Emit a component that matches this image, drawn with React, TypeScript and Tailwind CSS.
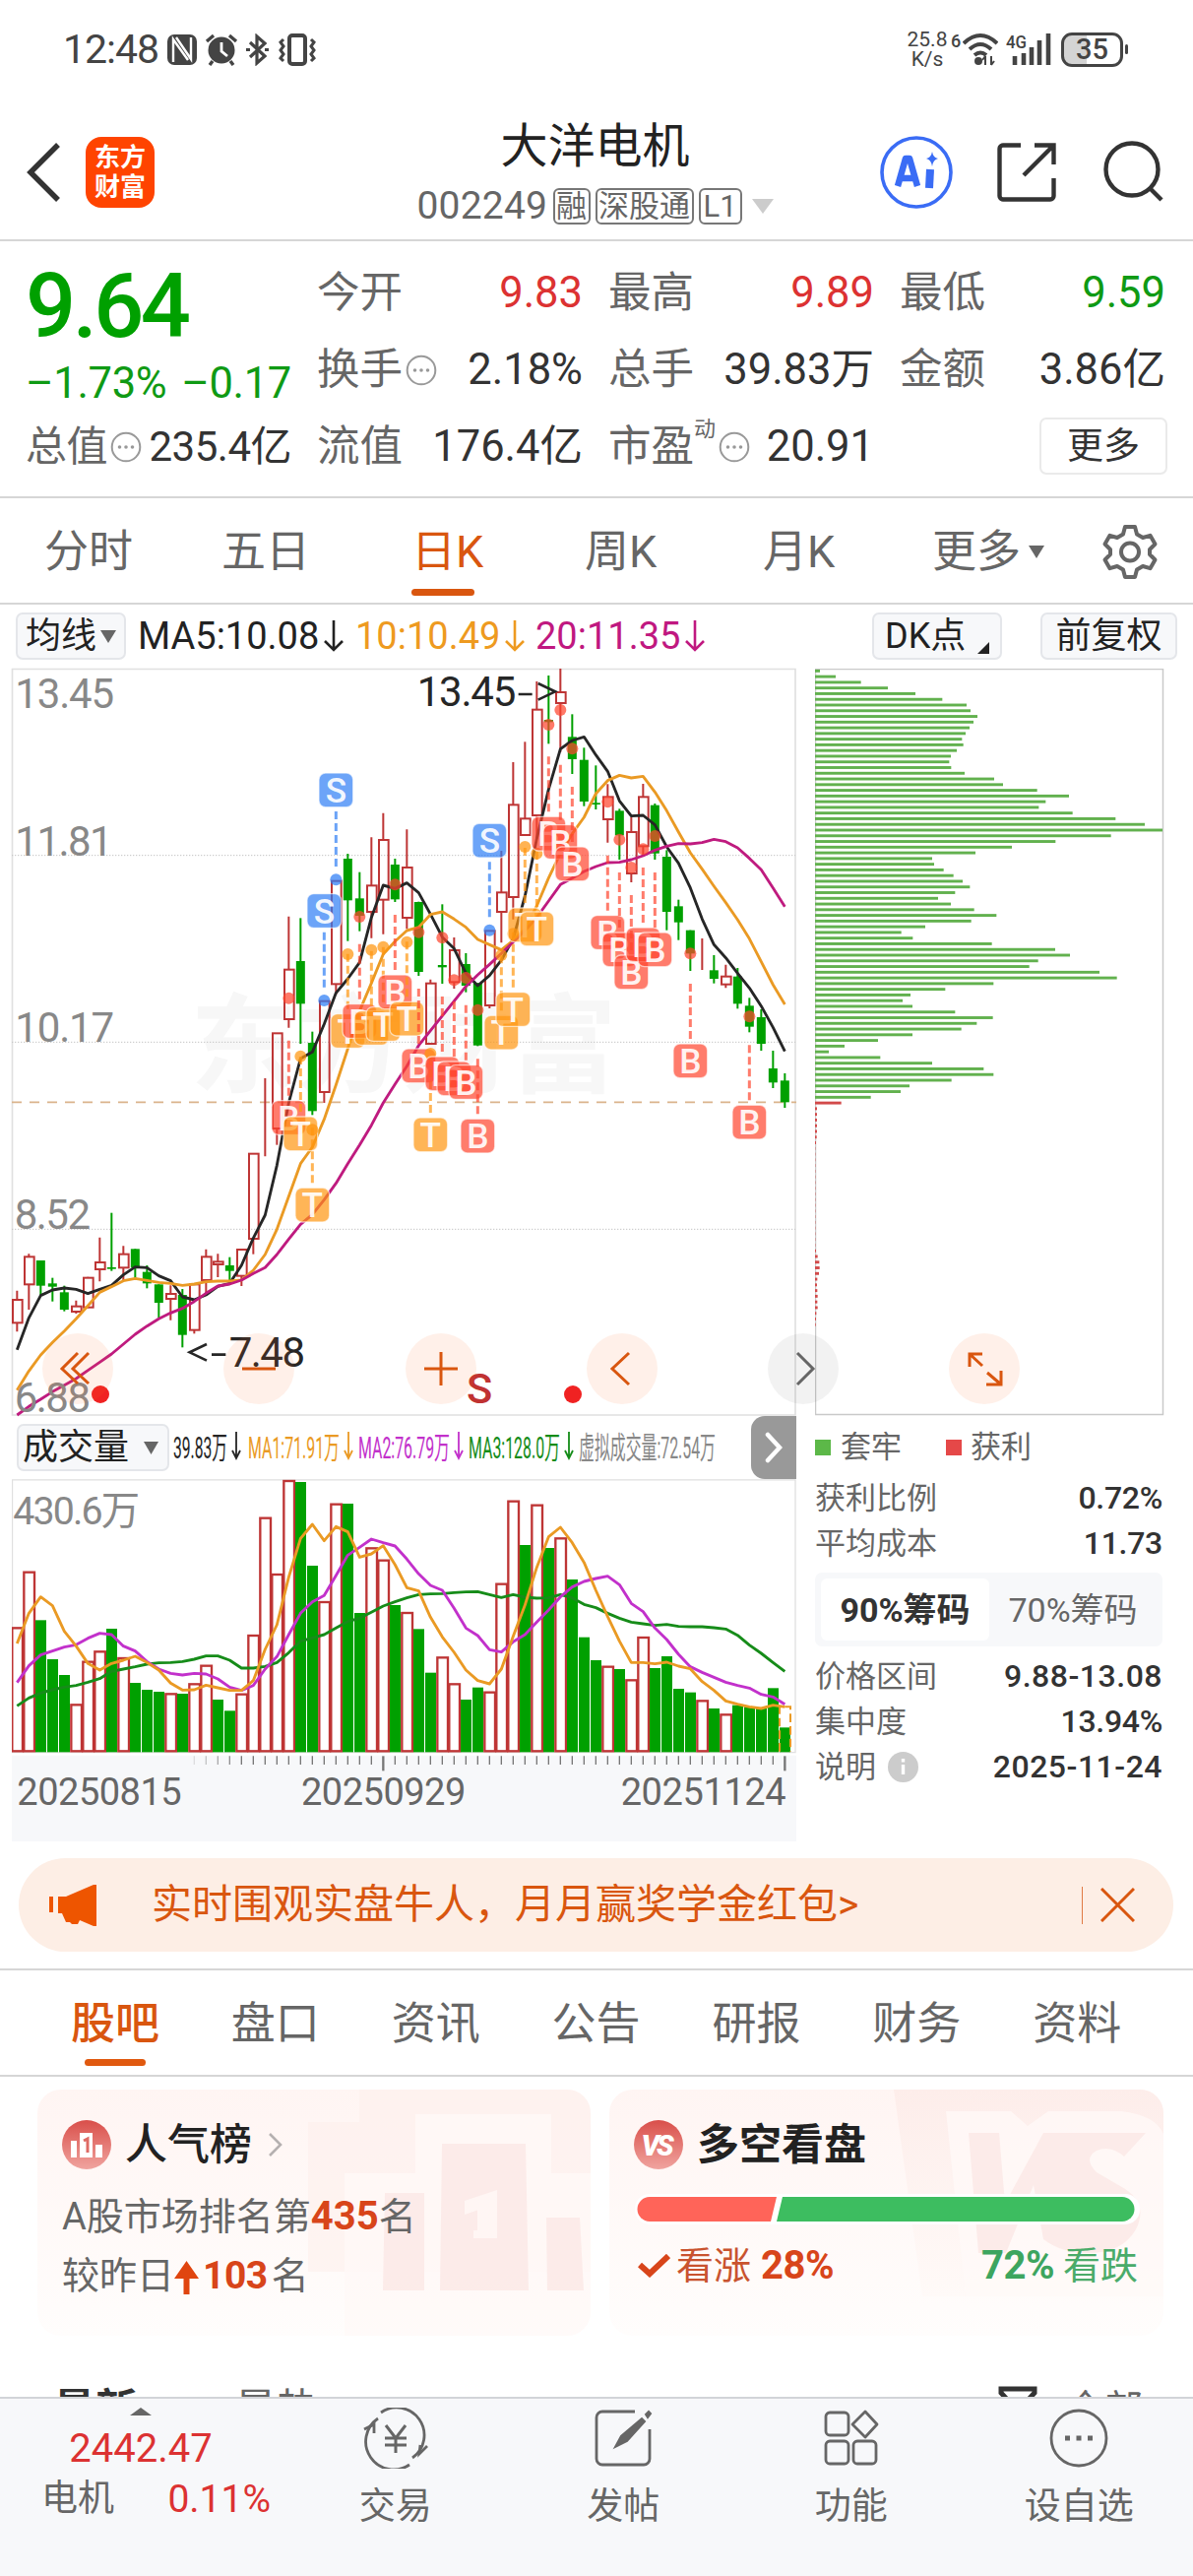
import type { ReactNode } from "react";

type Candle = [color: string, high: number, top: number, bottom: number, low: number];
type Mark = [kind: "B" | "S" | "T", index: number, dot: number];

// Chart coordinates are in thirds of a pixel, one trading day is 36 units wide
const STEP = 36;
const START = 52;
const dayX = (i: number) => START + i * STEP;

const candles: Candle[] = [
  ["r", 1922, 1950, 2020, 2047], ["r", 1810, 1819, 1903, 1980], ["g", 1830, 1830, 1907, 1935],
  ["g", 1883, 1900, 1910, 1955], ["g", 1907, 1927, 1980, 1985], ["r", 1952, 1970, 1986, 1992],
  ["r", 1880, 1883, 1973, 1975], ["r", 1760, 1836, 1857, 1894], ["g", 1685, 1851, 1856, 1862],
  ["r", 1786, 1811, 1852, 1890], ["g", 1795, 1795, 1852, 1885], ["g", 1845, 1865, 1900, 1915],
  ["g", 1903, 1903, 1959, 2005], ["r", 1906, 1932, 1947, 2012], ["g", 1917, 1935, 2057, 2095],
  ["r", 1903, 1903, 2042, 2053], ["r", 1796, 1819, 1890, 1930], ["r", 1810, 1834, 1842, 1881],
  ["g", 1820, 1845, 1862, 1890], ["r", 1797, 1797, 1877, 1908], ["r", 1505, 1505, 1764, 1811],
  ["r", 1275, 1465, 1465, 1513], ["r", 1138, 1138, 1428, 1478], ["r", 782, 944, 1095, 1121],
  ["g", 787, 918, 1048, 1170], ["g", 1133, 1167, 1375, 1387], ["r", 1040, 1040, 1317, 1350],
  ["r", 674, 674, 988, 1020], ["g", 591, 606, 733, 857], ["g", 647, 727, 780, 827],
  ["r", 541, 688, 768, 848], ["r", 467, 549, 731, 836], ["g", 606, 624, 730, 738],
  ["r", 517, 633, 786, 820], ["g", 737, 738, 951, 963], ["r", 974, 986, 1170, 1173],
  ["g", 745, 930, 937, 987], ["r", 846, 885, 982, 1002], ["g", 894, 927, 993, 1013],
  ["g", 985, 985, 1175, 1177], ["r", 826, 826, 1053, 1062], ["r", 582, 709, 768, 862],
  ["r", 312, 442, 723, 791], ["r", 250, 484, 534, 534], ["r", 66, 152, 474, 546],
  ["g", 48, 183, 190, 256], ["r", 27, 99, 132, 281], ["g", 166, 235, 303, 348],
  ["g", 268, 305, 432, 446], ["g", 322, 436, 441, 456], ["r", 379, 418, 486, 557],
  ["g", 454, 460, 535, 609], ["r", 480, 525, 651, 678], ["r", 378, 418, 568, 594],
  ["g", 438, 443, 590, 609], ["g", 580, 600, 768, 824], ["g", 731, 751, 800, 854],
  ["g", 824, 824, 895, 948], ["r", 849, 900, 900, 945], ["g", 900, 946, 972, 986],
  ["r", 929, 965, 989, 1000], ["g", 939, 965, 1048, 1063], ["g", 1030, 1054, 1118, 1135],
  ["g", 1065, 1089, 1170, 1191], ["g", 1191, 1245, 1288, 1305], ["g", 1260, 1282, 1348, 1365],
];

const ma5 = [
  2102, 2005, 1937, 1920, 1914, 1918, 1931, 1918, 1906, 1874, 1850, 1852, 1877, 1892, 1941, 1950, 1935, 1909, 1900,
  1845, 1762, 1692, 1540, 1350, 1215, 1195, 1110, 1015, 972, 922, 785, 687, 697, 680, 710, 775, 845, 880, 955, 993,
  962, 915, 850, 720, 545, 395, 272, 246, 235, 290, 340, 430, 476, 474, 503, 570, 620, 695, 790, 868, 908, 955, 1000,
  1055, 1120, 1193,
];
const ma10 = [
  2225, 2167, 2118, 2080, 2045, 2008, 1968, 1927, 1910, 1892, 1885, 1891, 1897, 1900, 1906, 1902, 1895, 1893, 1893,
  1890, 1860, 1812, 1735, 1635, 1535, 1485, 1400, 1295, 1185, 1070, 985, 897, 858, 825, 815, 776, 768, 790, 815, 852,
  868, 884, 855, 820, 750, 665, 590, 530, 480, 408, 368, 352, 360, 355, 403, 460, 525, 588, 638, 690, 740, 792, 850,
  920, 990, 1050,
];
const ma20 = [
  2301, 2275, 2253, 2230, 2210, 2190, 2165, 2140, 2115, 2085, 2055, 2030, 2008, 1990, 1976, 1955, 1930, 1908, 1902,
  1890, 1870, 1852, 1812, 1765, 1720, 1690, 1645, 1595, 1535, 1478, 1418, 1350, 1293, 1238, 1175, 1130, 1085, 1040,
  995, 960, 928, 895, 860, 825, 785, 735, 685, 665, 645, 630, 618, 617, 609, 597, 580, 568, 560, 561, 557, 547, 554,
  573, 605, 640, 695, 752,
];

const marks: Mark[] = [
  ["B", 23, 1031], ["T", 24, 1208], ["T", 25, 1432], ["S", 26, 1038], ["S", 27, 670], ["T", 28, 897],
  ["B", 29, 783], ["T", 30, 884], ["T", 31, 875], ["B", 32, 685], ["T", 33, 860], ["B", 34, 830],
  ["T", 35, 1200], ["B", 36, 847], ["B", 37, 976], ["B", 38, 969], ["B", 39, 1067], ["S", 40, 824],
  ["T", 41, 900], ["T", 42, 835], ["T", 43, 570], ["T", 44, 590], ["B", 45, 198], ["B", 46, 153],
  ["B", 47, 271], ["B", 50, 433], ["B", 51, 548], ["B", 52, 633], ["B", 53, 577], ["B", 54, 537],
  ["B", 57, 895], ["B", 62, 1087],
];
const markColor = { B: "#ff452e", T: "#ff960f", S: "#2d7df5" };

const volumes =
  "r638 r468 g616 g735 g783 r872 r741 r710 g642 r730 g807 g828 g834 r839 g840 r809 r753 g858 g892 r840 r661 r303 r475 r190 g195 g450 r559 r261 g261 g594 r395 r432 g570 r592 g643 g776 r728 r809 g858 g821 r834 r504 r252 g387 r264 g396 r365 g492 g668 g738 r756 g765 r797 r667 g762 g726 g825 g836 r860 g885 r902 g875 g880 g885 g823 g943".split(
    " "
  );
const vma1 = [
  687, 595, 545, 572, 650, 695, 748, 768, 748, 738, 726, 745, 768, 808, 829, 828, 814, 822, 830, 830, 800, 705, 630,
  485, 367, 324, 374, 331, 347, 424, 414, 389, 447, 517, 527, 607, 667, 714, 768, 800, 810, 765, 665, 570, 455, 362,
  333, 380, 440, 525, 605, 680, 745, 745, 749, 744, 756, 764, 803, 830, 862, 872, 880, 885, 875, 880,
];
const vma2 = [
  806, 755, 722, 710, 698, 691, 671, 656, 660, 695, 710, 742, 765, 778, 783, 778, 780, 795, 820, 830, 815, 765, 727,
  660, 595, 560, 541, 480, 418, 394, 369, 380, 390, 430, 475, 510, 525, 580, 640, 663, 706, 713, 682, 660, 622, 585,
  545, 515, 498, 489, 482, 508, 565, 590, 640, 675, 720, 758, 775, 790, 805, 815, 823, 842, 850, 872,
];
const vma3 = [
  877, 853, 838, 828, 820, 815, 805, 794, 772, 765, 758, 750, 746, 745, 742, 735, 725, 725, 738, 762, 762, 757, 745,
  715, 680, 670, 660, 640, 620, 610, 592, 573, 560, 548, 538, 536, 535, 532, 530, 529, 538, 547, 538, 546, 549, 548,
  538, 548, 568, 578, 595, 610, 622, 627, 632, 629, 635, 636, 636, 639, 643, 662, 692, 717, 745, 772,
];

const trapped = [
  15, 63, 140, 222, 306, 388, 462, 474, 495, 483, 471, 459, 448, 452, 432, 414, 409, 415, 456, 546, 573, 677, 774, 703,
  682, 785, 916, 1005, 1059, 902, 733, 600, 489, 357, 363, 392, 422, 450, 472, 427, 375, 414, 485, 553, 476, 336, 263,
  298, 539, 732, 777, 680, 653, 867, 920, 544, 397, 291, 267, 297, 427, 542, 493, 446, 297, 192, 90, 42, 199, 357,
  514, 544, 416, 288, 261, 170,
];
const profit = [
  80, 6, 6, 6, 6, 6, 5, 3, 1, 1, 1, 1, 1, 1, 1, 1, 1, 1, 1, 1, 1, 1, 1, 1, 1, 1, 3, 8, 13, 14, 12, 7, 6, 7, 8, 7, 8,
  4, 3, 2,
];

const points = (ys: number[]) => ys.map((y, i) => `${dayX(i)},${y}`).join(" ");

function Line({ ys, color }: { ys: number[]; color: string }) {
  return <polyline points={points(ys)} fill="none" stroke={color} strokeWidth="8.600" strokeLinejoin="round" />;
}

function DownArrow() {
  return (
    <svg className="ml-1 h-8 w-[22px]" viewBox="0 0 22 32" fill="none" stroke="currentColor" strokeWidth="2.6">
      <path d="M11 0V30M2 21l9 9 9-9" />
    </svg>
  );
}

function Caret({ className = "" }: { className?: string }) {
  return (
    <svg className={className} viewBox="0 0 16 14" preserveAspectRatio="none">
      <path d="M0 0h16L8 14z" fill="currentColor" />
    </svg>
  );
}

function Dots() {
  return (
    <svg className="ml-[3px] h-8 w-8 shrink-0" viewBox="0 0 32 32">
      <circle cx="16" cy="16" r="14.3" fill="none" stroke="#999" strokeWidth="2" />
      <circle cx="9.5" cy="16" r="1.8" fill="#999" />
      <circle cx="16" cy="16" r="1.8" fill="#999" />
      <circle cx="22.5" cy="16" r="1.8" fill="#999" />
    </svg>
  );
}

function StatusBar() {
  return (
    <div className="flex h-[100px] items-center pl-[64px] pr-[66px] text-[#444]">
      <span className="w-[106px] text-[41px] leading-none tracking-[-1px]">12:48</span>
      <svg className="h-[31px] w-[30px]" viewBox="0 0 30 31">
        <rect x="0" y="0" width="30" height="31" rx="7" fill="#444" />
        <path d="M6 28V5l15 21" fill="none" stroke="#fff" strokeWidth="2.4" />
        <path d="M9 3l15 22V3" fill="none" stroke="#fff" strokeWidth="2.4" />
      </svg>
      <svg className="ml-2 h-[33px] w-[34px]" viewBox="0 0 34 33">
        <circle cx="17" cy="17" r="13.5" fill="#444" />
        <path d="M2 8l7-6M32 8l-7-6M8 28l-3 4M26 28l3 4" stroke="#444" strokeWidth="3.4" />
        <path d="M17 9v9l6 5" fill="none" stroke="#fff" strokeWidth="2.8" />
      </svg>
      <svg className="ml-2 h-[33px] w-[24px]" viewBox="0 0 24 33" fill="none" stroke="#444" strokeWidth="3.2">
        <path d="M4 9l15 14-8 7V3l8 7L4 24" />
        <path d="M0 16.5h4M19 16.5h4" />
      </svg>
      <svg className="ml-2 h-[33px] w-[40px]" viewBox="0 0 40 33" fill="none" stroke="#444" strokeWidth="3">
        <rect x="12" y="2" width="16" height="29" rx="3" strokeWidth="4" />
        <path d="M6 6l-3 3 3 4-3 4 3 4-3 4 3 3M34 6l3 3-3 4 3 4-3 4 3 4-3 3" />
      </svg>
      <div className="ml-auto flex w-[46px] flex-col items-center text-[21px] leading-[20px]">
        <span>25.8</span>
        <span>K/s</span>
      </div>
      <span className="mb-4 ml-[1px] w-[12px] text-[18px] font-medium leading-none">6</span>
      <svg className="h-[34px] w-[36px]" viewBox="0 0 36 34" fill="none" stroke="#444" strokeWidth="4">
        <path d="M1 11Q18-5 35 11M7 17Q18 7 29 17" />
        <path d="M12 23q6-5 12 0" />
        <circle cx="16" cy="29" r="4" fill="#444" stroke="none" />
        <path d="M23 24v9m0-9l-3 4M29 33v-9m0 9l3-4" strokeWidth="2" />
      </svg>
      <svg className="ml-2 h-[34px] w-[46px]" viewBox="0 0 46 34">
        <text x="0" y="16" fontSize="19" fontWeight="500" textLength="21" lengthAdjust="spacingAndGlyphs" fill="#444">4G</text>
        <path d="M9 24v9M18 21v12M26 15v18M34 8v25M43 1v32" stroke="#444" strokeWidth="4.6" />
      </svg>
      <div className="ml-[10px] flex h-[35px] w-[63px] items-center justify-center rounded-[11px] border-[3px] border-[#444] bg-gradient-to-r from-[#d4d4d4] from-40% to-white to-40%">
        <span className="text-[29px] font-medium leading-none">35</span>
      </div>
      <span className="ml-[2px] h-[10px] w-[3px] rounded bg-[#444]" />
    </div>
  );
}

function TitleBar() {
  const tag = "flex h-[37px] items-center justify-center rounded-[6px] border-2 border-[#777] text-[31px] leading-none";
  return (
    <header className="flex h-[145px] border-b-2 border-[#d6d6d6]">
      <div className="flex w-[397px] items-start pl-[27px] pt-[39px]">
        <svg className="mt-[6px] h-[60px] w-[36px]" viewBox="0 0 36 60" fill="none" stroke="#333" strokeWidth="5.5">
          <path d="M32 2L4 30l28 28" />
        </svg>
        <div className="ml-6 flex h-[72px] w-[70px] flex-col items-center justify-center rounded-[16px] bg-[#ff4400] text-[26px] font-bold leading-[30px] text-white">
          <span>东方</span>
          <span>财富</span>
        </div>
      </div>
      <div className="flex w-[415px] flex-col items-center">
        <h1 className="mt-[24px] h-[50px] text-[48px] leading-[50px] text-[#222]">大洋电机</h1>
        <div className="mt-[15px] flex h-10 items-center text-[#666]">
          <span className="w-[138px] text-[39px] leading-none tracking-[0.2px]">002249</span>
          <span className={`${tag} w-[38px]`}>融</span>
          <span className={`${tag} ml-[5px] w-[100px]`}>深股通</span>
          <span className={`${tag} ml-[5px] w-[44px]`}>L1</span>
          <Caret className="ml-[10px] h-[15px] w-[22px] text-[#ccc]" />
        </div>
      </div>
      <div className="flex flex-1 items-start pl-[82px] pt-[38px]">
        <svg className="h-[74px] w-[74px]" viewBox="0 0 74 74">
          <circle cx="37" cy="37" r="35" fill="none" stroke="#3a6cf5" strokeWidth="3.6" />
          <path d="M18 51L26 23h4l8 28M21 43h13" fill="none" stroke="#3a6cf5" strokeWidth="6.5" strokeLinejoin="round" />
          <path d="M51 34l-1 19" stroke="#3a6cf5" strokeWidth="8" />
          <path d="M53 16q1 6 6 7-5 1-6 8-1-7-6-8 5-1 6-7z" fill="#3a6cf5" />
        </svg>
        <svg className="ml-[45px] mt-[7px] h-[60px] w-[60px]" viewBox="0 0 60 60" fill="none" stroke="#333" strokeWidth="4.4">
          <path d="M24 2.5H6a3.5 3.5 0 0 0-3.5 3.5V54a3.5 3.5 0 0 0 3.5 3.5H54a3.5 3.5 0 0 0 3.5-3.5V36" />
          <path d="M38 2.5H57.5V22M57 3L27 33" />
        </svg>
        <svg className="ml-[48px] mt-[5px] h-[62px] w-[62px]" viewBox="0 0 62 62" fill="none" stroke="#333" strokeWidth="4.4">
          <circle cx="29" cy="29" r="26.5" />
          <path d="M47 48l12 12" />
        </svg>
      </div>
    </header>
  );
}

function Quote({ label, value, color = "text-[#333]", children }: { label: string; value: string; color?: string; children?: ReactNode }) {
  return (
    <div className="flex h-[78px] items-center">
      <span className="text-[#666]">{label}</span>
      {children}
      <span className={`ml-auto ${color}`}>{value}</span>
    </div>
  );
}

function Quotes() {
  return (
    <section className="grid h-[261px] grid-cols-[270px_270px_270px_270px] gap-x-[26px] border-b-2 border-[#d6d6d6] pl-[26px] pt-[14px] text-[43.5px] leading-none">
      <div>
        <div className="h-[92px] text-[90px] font-medium leading-[106px] tracking-[-3.5px] text-[#00a000]">9.64</div>
        <div className="flex h-[78px] items-center justify-between text-[#0f9a14]">
          <span className="tracking-[-0.3px]">–1.73%</span>
          <span className="tracking-[-0.3px]">–0.17</span>
        </div>
        <div className="-mt-[14px] text-[42px] tracking-[-0.5px]">
          <Quote label="总值" value="235.4亿">
            <Dots />
          </Quote>
        </div>
      </div>
      <div>
        <Quote label="今开" value="9.83" color="text-[#dc3232]" />
        <Quote label="换手" value="2.18%">
          <Dots />
        </Quote>
        <Quote label="流值" value="176.4亿" />
      </div>
      <div>
        <Quote label="最高" value="9.89" color="text-[#dc3232]" />
        <Quote label="总手" value="39.83万" />
        <Quote label="市盈" value="20.91">
          <span className="mb-9 text-[22px] text-[#666]">动</span>
          <Dots />
        </Quote>
      </div>
      <div>
        <Quote label="最低" value="9.59" color="text-[#0f9a14]" />
        <Quote label="金额" value="3.86亿" />
        <div className="-mr-[2px] ml-auto mt-[9px] flex h-[58px] w-[130px] items-center justify-center rounded-[7px] border-2 border-[#eaeaea] text-[37px] text-[#333]">
          更多
        </div>
      </div>
    </section>
  );
}

function PeriodTabs() {
  return (
    <nav className="flex h-[108px] items-center border-b-2 border-[#d6d6d6] pl-[45px] pt-[2px] text-[45px] leading-none text-[#666]">
      <span className="w-[180px]">分时</span>
      <span className="w-[193px]">五日</span>
      <span className="relative w-[176px] text-[#d9560f]">
        日K
        <i className="absolute -bottom-[22px] left-0 h-[7px] w-[64px] rounded bg-[#d9560f]" />
      </span>
      <span className="w-[181px]">周K</span>
      <span className="w-[172px]">月K</span>
      <span>更多</span>
      <Caret className="ml-2 h-[13px] w-4" />
      <svg className="ml-[59px] h-[56px] w-[56px]" viewBox="0 0 56 56" fill="none" stroke="#666" strokeWidth="4" strokeLinejoin="round">
        <path d="M23 3h10l2 7.5 6 3.500 7.5-2.2 5 8.700-5.500 5.500v5l5.500 5.500-5 8.700-7.500-2.200-6 3.500-2 7.500H23l-2-7.500-6-3.500-7.500 2.200-5-8.700L8 31v-5l-5.500-5.500 5-8.700L15 14l6-3.500z" />
        <circle cx="28" cy="28.5" r="9" />
      </svg>
    </nav>
  );
}

function IndicatorRow() {
  const chip = "flex h-[48px] items-center rounded-[7px] border-2 border-[#e4e6ea] bg-[#f7f8fa] text-[36px] text-[#222]";
  return (
    <div className="flex h-[64px] items-center pl-4 text-[38px] leading-none">
      <div className={`${chip} w-[112px] pl-2`}>
        均线
        <Caret className="ml-1 h-[13px] w-4 text-[#666]" />
      </div>
      <span className="ml-3 flex w-[221px] items-center text-[#222]">
        MA5:10.08
        <DownArrow />
      </span>
      <span className="flex w-[183px] items-center text-[#ee9a20]">
        10:10.49
        <DownArrow />
      </span>
      <span className="flex w-[342px] items-center text-[#c01880]">
        20:11.35
        <DownArrow />
      </span>
      <div className={`${chip} w-[132px] pl-[11px]`}>
        DK点
        <svg className="ml-[12px] mt-6 h-[12px] w-[12px]" viewBox="0 0 12 12">
          <path d="M12 0v12H0z" fill="#222" />
        </svg>
      </div>
      <div className={`${chip} ml-[39px] w-[139px] justify-center`}>前复权</div>
    </div>
  );
}

function Badge({ mark: [kind, index, dot] }: { mark: Mark }) {
  const x = dayX(index);
  const low = candles[index][4];
  const up = kind === "S";
  const y = up ? dot - 273 : low + 274;
  const from = up ? y + 65 : low + 39;
  const color = markColor[kind];
  return (
    <g>
      <path d={`M${x} ${from}V${from + 168}`} stroke={color} strokeWidth="9" strokeDasharray="24 12" opacity="0.7" />
      <circle cx={x} cy={dot} r="18" fill={color} opacity="0.72" />
      <rect x={x - 52} y={y - 52} width="104" height="104" rx="20" fill={color} fillOpacity="0.7" stroke="#fff" strokeOpacity="0.6" strokeWidth="4" />
      <text x={x} y={y + 38} fontSize="106" fontWeight="500" textAnchor="middle" fill="#fff" fillOpacity="0.92">
        {kind}
      </text>
    </g>
  );
}

function CandleChart() {
  return (
    <svg className="block h-[760px] w-[798px] overflow-visible" viewBox="36 27 2394 2280">
      <text x="580" y="1292" fontSize="326" fontWeight="700" textLength="1300" fill="#f7f7f7">东方财富</text>
      <path d="M37.500 2301V28.500H2424V2301z" fill="none" stroke="#e0e0e0" strokeWidth="5" />
      <path d="M36 596H2424M36 1165H2424M36 1735H2424" stroke="#c4c4c4" strokeWidth="3" strokeDasharray="4 5" />
      <path d="M36 1348H2427" stroke="#dab48c" strokeWidth="5" strokeDasharray="30 24" />
      {candles.map(([color, high, top, bottom, low], i) => {
        const x = dayX(i);
        if (color === "g") {
          return (
            <g key={i} fill="#00a000">
              <rect x={x - 3} y={high} width="6" height={low - high} />
              <rect x={x - 13.5} y={top} width="27" height={Math.max(bottom - top, 4)} />
            </g>
          );
        }
        return (
          <g key={i} stroke="#be3535" strokeWidth="6" fill="none">
            <path d={`M${x} ${high}V${top}M${x} ${bottom}V${low}`} />
            <rect x={x - 13} y={top} width="29" height={bottom - top} />
          </g>
        );
      })}
      <Line ys={ma5} color="#262626" />
      <Line ys={ma10} color="#ea9a24" />
      <Line ys={ma20} color="#bf1b7f" />
      {marks.map((mark, i) => (
        <Badge key={i} mark={mark} />
      ))}
      <g fontSize="126" fill="#888">
        <text x="46" y="148" textLength="302">13.45</text>
        <text x="46" y="597" textLength="298">11.81</text>
        <text x="46" y="1164" textLength="302">10.17</text>
        <text x="44" y="1735" textLength="232">8.52</text>
        <text x="44" y="2292" textLength="232">6.88</text>
      </g>
      <g fontSize="126" fill="#262626">
        <text x="1271" y="141" textLength="302">13.45</text>
        <text x="698" y="2153" textLength="232">7.48</text>
      </g>
      <path d="M1580 105H1622M1640 72L1692 97L1640 122" fill="none" stroke="#262626" strokeWidth="8" />
      <path d="M645 2117H688M630 2085L578 2110L630 2135" fill="none" stroke="#262626" strokeWidth="8" />
      <circle cx="306" cy="2238" r="27" fill="#f02222" />
      <circle cx="1746" cy="2238" r="27" fill="#f02222" />
      <text x="1422" y="2264" fontSize="130" fontWeight="500" fill="#c03232">S</text>
    </svg>
  );
}

const tools = [
  { name: "first", d: "M36 20L20 36l16 15M47 20L31 36l16 15" },
  { name: "zoom out", d: "M19 36h34" },
  { name: "zoom in", d: "M19 36h34M36 19v34" },
  { name: "previous", d: "M43 20L26 36l17 16" },
  { name: "next", d: "M30 20l16 16-16 16" },
  { name: "expand", d: "M34 21H21v13M21 21l13 12M38 52h15V38M53 52L39 40" },
];

function ChartTools() {
  return (
    <div className="absolute bottom-[13px] left-[43px] flex gap-[112.3px]">
      {tools.map(({ name, d }) => (
        <button
          key={name}
          aria-label={name}
          className={`h-[72px] w-[72px] rounded-full ${name === "next" ? "bg-black/5 text-[#666]" : "bg-[#ff6e28]/10 text-[#d9560f]"}`}
        >
          <svg viewBox="0 0 72 72" fill="none" stroke="currentColor" strokeWidth="3">
            <path d={d} />
          </svg>
        </button>
      ))}
    </div>
  );
}

function ChipChart() {
  return (
    <svg className="ml-[18px] block h-[760px] w-[356px]" viewBox="0 0 356 760">
      <path d="M0.500 0.500H353.500V757.500H0.500z" fill="none" stroke="#c9c9c9" strokeWidth="1.500" />
      {trapped.map((w, i) => (
        <rect key={i} x="0" y={0.9 + i * 5.773} width={w / 3} height="2.9" fill="#62b14e" />
      ))}
      {profit.map((w, i) => (
        <rect key={i} x="0" y={0.9 + (i + trapped.length) * 5.773} width={w / 3} height="2.9" fill="#d24a4a" />
      ))}
    </svg>
  );
}

const volumeLegend = [
  { text: "39.83万", x: 0, w: 52, color: "#262626" },
  { text: "MA1:71.91万", x: 76, w: 90, color: "#ea9a24" },
  { text: "MA2:76.79万", x: 188, w: 90, color: "#c231cb" },
  { text: "MA3:128.0万", x: 300, w: 90, color: "#148c18" },
];

function VolumeHeader() {
  return (
    <div className="flex h-[64px] items-center">
      <div className="ml-[5px] flex h-[48px] w-[155px] items-center rounded-[7px] border-2 border-[#e4e6ea] bg-[#f7f8fa] pl-1 text-[36px] leading-none text-[#222]">
        成交量
        <Caret className="ml-[15px] h-[13px] w-[15px] text-[#666]" />
      </div>
      <svg className="ml-1 h-[50px] w-[560px] overflow-visible" viewBox="0 0 560 50">
        {volumeLegend.map(({ text, x, w, color }) => (
          <g key={text}>
            <text x={x} y="36" fontSize="31" textLength={w + 3} lengthAdjust="spacingAndGlyphs" fill={color}>
              {text}
            </text>
            <path d={`M${x + w + 12} 9v27m-4-8l4 8 4-8`} fill="none" stroke={color} strokeWidth="1.8" />
          </g>
        ))}
        <text x="412" y="36" fontSize="31" textLength="139" lengthAdjust="spacingAndGlyphs" fill="#888">
          虚拟成交量:72.54万
        </text>
      </svg>
      <div className="ml-auto flex h-[64px] w-[46px] items-center justify-center rounded-l-[14px] bg-[#999]">
        <svg className="h-[32px] w-[18px]" viewBox="0 0 18 32" fill="none" stroke="#fff" strokeWidth="4.5" strokeLinecap="round">
          <path d="M3 3l12 13L3 29" />
        </svg>
      </div>
    </div>
  );
}

function VolumeChart() {
  return (
    <svg className="block h-[368px] w-[797px]" viewBox="36 186 2391 1104">
      <rect x="36" y="1028" width="2391" height="262" fill="#f7f8fa" />
      <path d="M37.500 1019V188.500H2424V1019z" fill="none" stroke="#e0e0e0" strokeWidth="4" />
      {volumes.map((item, i) => {
        const x = dayX(i);
        const y = Number(item.slice(1));
        return item[0] === "g" ? (
          <rect key={i} x={x - 16} y={y} width="33" height={1018 - y} fill="#00a000" />
        ) : (
          <rect key={i} x={x - 15} y={y + 2} width="32" height={1013 - y} fill="#fff" stroke="#be3535" strokeWidth="7" />
        );
      })}
      <path d={`M${dayX(65) - 16} 1016V880h33V1016`} fill="none" stroke="#ea9a24" strokeWidth="6" strokeDasharray="26 12" />
      <Line ys={vma3} color="#168c19" />
      <Line ys={vma2} color="#c231cb" />
      <Line ys={vma1} color="#ea9a24" />
      <text x="40" y="323" fontSize="118" textLength="386" fill="#888">430.6万</text>
      {volumes.map((_, i) =>
        i < 15 ? null : (
          <path
            key={i}
            d={`M${dayX(i)} 1030v${i === 31 || i === 65 ? 45 : 26}`}
            stroke="#777"
            strokeWidth={i === 31 || i === 65 ? 7 : 4}
            opacity={Math.min(1, (i - 14) / 5)}
          />
        )
      )}
      <g fontSize="114" fill="#666">
        <text x="52" y="1178" textLength="502">20250815</text>
        <text x="918" y="1178" textLength="502">20250929</text>
        <text x="1892" y="1178" textLength="504">20251124</text>
      </g>
    </svg>
  );
}

function InfoRow({ label, value, icon }: { label: string; value: string; icon?: boolean }) {
  return (
    <div className="flex h-[46px] items-center">
      <span className="text-[#666]">{label}</span>
      {icon && (
        <svg className="ml-[12px] h-[31px] w-[31px]" viewBox="0 0 31 31">
          <circle cx="15.5" cy="15.5" r="15.5" fill="#ccc" />
          <path d="M15.5 13v10M15.5 7v3.5" stroke="#fff" strokeWidth="3.4" />
        </svg>
      )}
      <span className={`ml-auto text-[32px] font-medium text-[#333] ${value.includes("-") ? "tracking-[0.5px]" : "tracking-[-0.3px]"}`}>
        {value}
      </span>
    </div>
  );
}

function ChipInfo() {
  return (
    <div className="ml-[19px] flex w-[353px] flex-col text-[31px] leading-none">
      <div className="flex h-[62px] items-center text-[#666]">
        <i className="mr-[10px] mt-[1px] h-4 w-4 bg-[#5cb848]" />
        <span className="w-[107px]">套牢</span>
        <i className="mr-[9px] mt-[1px] h-4 w-4 bg-[#e54848]" />
        <span>获利</span>
      </div>
      <div className="-mt-[2px]">
        <InfoRow label="获利比例" value="0.72%" />
        <InfoRow label="平均成本" value="11.73" />
      </div>
      <div className="my-[7px] flex h-[75px] rounded-[7px] bg-[#f7f8fa] p-[6px] text-[34px]">
        <div className="flex w-[171px] items-center justify-center rounded-[6px] bg-white font-bold text-[#333]">90%筹码</div>
        <div className="flex flex-1 items-center justify-center text-[#666]">70%筹码</div>
      </div>
      <InfoRow label="价格区间" value="9.88-13.08" />
      <InfoRow label="集中度" value="13.94%" />
      <InfoRow label="说明" value="2025-11-24" icon />
    </div>
  );
}

function Banner() {
  return (
    <div className="ml-[19px] mt-[17px] flex h-[95px] w-[1173px] items-center rounded-full bg-[#fdeee5] pl-[30px] pr-[39px] text-[#d9560f]">
      <svg className="h-[42px] w-[50px]" viewBox="0 0 50 42" fill="#ee5500">
        <path d="M1 12h4v16H1zM10 12h8L46 0h3v42h-3l-14-6-2 4h-6l-2-2h-4l-4-9h-4z" />
      </svg>
      <span className="ml-[55px] text-[41px] leading-none">实时围观实盘牛人，月月赢奖学金红包&gt;</span>
      <i className="ml-auto h-[38px] w-[1.5px] bg-[#e07a44]" />
      <svg className="ml-[18px] h-[35px] w-[35px]" viewBox="0 0 35 35" stroke="#d9560f" strokeWidth="3">
        <path d="M1 1l33 33M34 1L1 34" />
      </svg>
    </div>
  );
}

function SectionTabs() {
  return (
    <nav className="mt-[17px] flex h-[110px] items-center border-y-2 border-[#d6d6d6] pl-[72px] pt-[2px] text-[45px] leading-none text-[#666]">
      {["股吧", "盘口", "资讯", "公告", "研报", "财务", "资料"].map((name, i) => (
        <span key={name} className={i === 0 ? "relative w-[163px] font-medium text-[#d9560f]" : "w-[163px]"}>
          {name}
          {i === 0 && <i className="absolute -bottom-[20px] left-[14px] h-[7px] w-[62px] rounded bg-[#e0590f]" />}
        </span>
      ))}
    </nav>
  );
}

function RankCard() {
  return (
    <div className="relative h-[250px] w-[562px] overflow-hidden rounded-[24px] bg-gradient-to-b from-[#fff5f3] to-[#fffdfc] pl-[25px] pt-[31px]">
      <svg className="absolute inset-0 h-full w-full" viewBox="0 0 562 250">
        <path d="M275 33h52V0h235v185H275z" fill="#fdeeeb" opacity="0.55" />
        <path d="M312 85h72V25h138v60h40v165H312z" fill="#fff9f7" opacity="0.8" />
        <path d="M353 105h40v99h-42zM411 55h85l3 149h-90zM517 130h34l4 74h-37z" fill="#fce9e6" opacity="0.85" />
        <path d="M434 113l33-11v49h-13v-31l-20 7zM447 117h20v34h-24v-8h4z" fill="#fff6f4" />
      </svg>
      <div className="relative flex items-center">
        <svg className="h-[50px] w-[50px]" viewBox="0 0 50 50">
          <defs>
            <linearGradient id="ball" x1="0" y1="0" x2="0" y2="1">
              <stop offset="0" stopColor="#d94f4a" />
              <stop offset="1" stopColor="#f0a49f" />
            </linearGradient>
          </defs>
          <circle cx="25" cy="25" r="25" fill="url(#ball)" />
          <path d="M9 21h6v17H9zM18 13h13v25H18zM34 25h7v13h-7z" fill="#fff" />
          <path d="M22 21l4-2v14" fill="none" stroke="#de6a64" strokeWidth="3" />
        </svg>
        <span className="ml-[14px] text-[43px] font-medium leading-[50px] text-[#222]">人气榜</span>
        <svg className="ml-[17px] h-[24px] w-[14px]" viewBox="0 0 14 24" fill="none" stroke="#b5b0b0" strokeWidth="2.6">
          <path d="M1 1l11 11L1 23" />
        </svg>
      </div>
      <div className="relative mt-[18px] flex h-[60px] items-center text-[38px] leading-none text-[#666]">
        A股市场排名第<b className="text-[40px] text-[#d8451a]">435</b>名
      </div>
      <div className="relative flex h-[60px] items-center text-[38px] leading-none text-[#666]">
        较昨日
        <svg className="mr-1 mt-1 h-[34px] w-[25px]" viewBox="0 0 25 34">
          <path d="M12.5 0L25 18h-9.5v16h-6V18H0z" fill="#e0450f" />
        </svg>
        <b className="mr-1 text-[39px] tracking-[-0.5px] text-[#d8451a]">103</b>名
      </div>
    </div>
  );
}

function VoteCard() {
  return (
    <div className="relative h-[250px] w-[563px] overflow-hidden rounded-[24px] bg-gradient-to-b from-[#fff5f3] to-[#fffdfc] pl-[25px] pr-[26px] pt-[31px]">
      <svg className="absolute inset-0 h-full w-full" viewBox="0 0 563 250">
        <defs>
          <linearGradient id="fade" x1="0" y1="0" x2="0" y2="1">
            <stop offset="0" stopColor="#fdedea" />
            <stop offset="1" stopColor="#fffaf8" />
          </linearGradient>
        </defs>
        <path d="M289 0H563V210H318z" fill="url(#fade)" />
        <path d="M342 22H408L425 37L446 22H520Q555 26 563 45V210H362z" fill="#fffaf8" opacity="0.75" />
        <path
          d="M365 44h31l6 72l39-72h104v0l-22 24q-14-12-28-6q-14 8 0 22l24 14q30 16 16 44q-14 24-48 24q-28 0-46-14l-10-55l-28 69h-28z"
          fill="#fce9e6"
          opacity="0.85"
        />
      </svg>
      <div className="relative flex items-center">
        <svg className="h-[50px] w-[50px]" viewBox="0 0 50 50">
          <circle cx="25" cy="25" r="25" fill="url(#ball)" />
          <text x="24" y="36" fontSize="29" fontWeight="900" fontStyle="italic" textAnchor="middle" textLength="33" fill="#fff">VS</text>
        </svg>
        <span className="ml-[14px] text-[43px] font-bold leading-[50px] text-[#222]">多空看盘</span>
      </div>
      <svg className="relative ml-[1px] mt-[25px] block h-[31px] w-[513px]" viewBox="0 0 513 31">
        <rect x="0" y="0" width="513" height="31" rx="15" fill="#fff" />
        <path d="M15 3H144l-6 25H15a12.500 12.500 0 0 1 0-25z" fill="#ff6459" />
        <path d="M150 3H495a12.500 12.500 0 0 1 0 25H144z" fill="#3dbd60" />
      </svg>
      <div className="relative mt-[12px] flex h-[60px] items-center pl-1 text-[38px] leading-none">
        <svg className="mr-[6px] h-[24px] w-[33px]" viewBox="0 0 33 24" fill="none" stroke="#d8451a" strokeWidth="6">
          <path d="M2 11l10 9L31 2" />
        </svg>
        <span className="mr-[10px] text-[#c9532f]">看涨</span>
        <b className="text-[40px] tracking-[-0.5px] text-[#d8451a]">28%</b>
        <b className="ml-auto mr-[9px] text-[40px] tracking-[-0.5px] text-[#3da55f]">72%</b>
        <span className="text-[#4aab6a]">看跌</span>
      </div>
    </div>
  );
}

function FeedTabs() {
  return (
    <div className="mt-[50px] flex h-[12px] items-start overflow-hidden pl-[54px] pr-[51px] text-[43px] leading-[50px] text-[#666]">
      <span className="w-[184px] font-bold text-[#333]">最新</span>
      <span>最热</span>
      <svg className="ml-auto mr-[28px] mt-[1px] h-[40px] w-[42px] shrink-0" viewBox="0 0 42 40" fill="none" stroke="#333" strokeWidth="5">
        <path d="M4 3H38v4L26 20V36H16V20L4 7z" />
      </svg>
      <span className="text-[39px]">全部</span>
    </div>
  );
}

const actions = [
  {
    name: "交易",
    icon: (
      <>
        <path d="M19 5a28 28 0 0 1 32 46M48 58a28 28 0 0 1-32-47" />
        <path d="M2 22l10-5v9M66 39l-8 8 1-9" />
        <path d="M24 18l10 13 10-13M34 31v15M23 31h22M23 38h22" strokeWidth="3" />
      </>
    ),
  },
  {
    name: "发帖",
    icon: (
      <>
        <path d="M46 4H13a6 6 0 0 0-6 6V52a6 6 0 0 0 6 6H55a6 6 0 0 0 6-6V22" />
        <path d="M26 40l6-11L53 11l3 3L38 34zM57 7l3-3 2 2-3 4z" fill="#666" strokeWidth="2" />
      </>
    ),
  },
  {
    name: "功能",
    icon: (
      <>
        <rect x="8" y="5" width="23" height="23" rx="4" />
        <rect x="8" y="34" width="23" height="23" rx="4" />
        <rect x="36" y="34" width="23" height="23" rx="4" />
        <path d="M48 4L60 17 48 30 35 17z" strokeLinejoin="round" />
      </>
    ),
  },
  {
    name: "设自选",
    icon: (
      <>
        <circle cx="34" cy="31" r="28" />
        <path d="M20 31h5M31.5 31h5M43 31h5" strokeWidth="5" />
      </>
    ),
  },
];

function BottomBar() {
  return (
    <footer className="flex h-[182px] border-t-2 border-[#d2d4d8] bg-[#f7f8fa] text-[37px] leading-none text-[#666]">
      <div className="flex w-[287px] flex-col items-center">
        <Caret className="mt-[9px] h-[8px] w-[22px] rotate-180" />
        <span className="mt-[11px] h-[46px] text-[40px] leading-[46px] text-[#dc3232]">2442.47</span>
        <div className="mt-[6px] flex w-full items-center pl-[42px] pr-[11px] leading-[44px]">
          电机<span className="ml-auto text-[39px] text-[#dc3232]">0.11%</span>
        </div>
      </div>
      <div className="flex flex-1">
        {actions.map(({ name, icon }) => (
          <div key={name} className="flex w-[231.5px] flex-col items-center pt-[9px]">
            <svg className="h-[62px] w-[68px]" viewBox="0 0 68 62" fill="none" stroke="#666" strokeWidth="2.8">
              {icon}
            </svg>
            <span className="mt-[17px] leading-[44px]">{name}</span>
          </div>
        ))}
      </div>
    </footer>
  );
}

export default function App() {
  return (
    <div className="flex h-[2616px] w-[1212px] flex-col overflow-hidden bg-white font-['Roboto','Noto_Sans_CJK_SC',sans-serif]">
      <StatusBar />
      <TitleBar />
      <Quotes />
      <PeriodTabs />
      <IndicatorRow />
      <div className="relative mt-[1px] flex h-[760px] pl-3">
        <CandleChart />
        <ChipChart />
        <ChartTools />
      </div>
      <div className="-mt-[1px] flex pl-3">
        <div className="w-[797px]">
          <VolumeHeader />
          <VolumeChart />
        </div>
        <ChipInfo />
      </div>
      <Banner />
      <SectionTabs />
      <div className="flex gap-[19px] pl-[38px] pt-[13px]">
        <RankCard />
        <VoteCard />
      </div>
      <FeedTabs />
      <div className="mt-auto">
        <BottomBar />
      </div>
    </div>
  );
}
